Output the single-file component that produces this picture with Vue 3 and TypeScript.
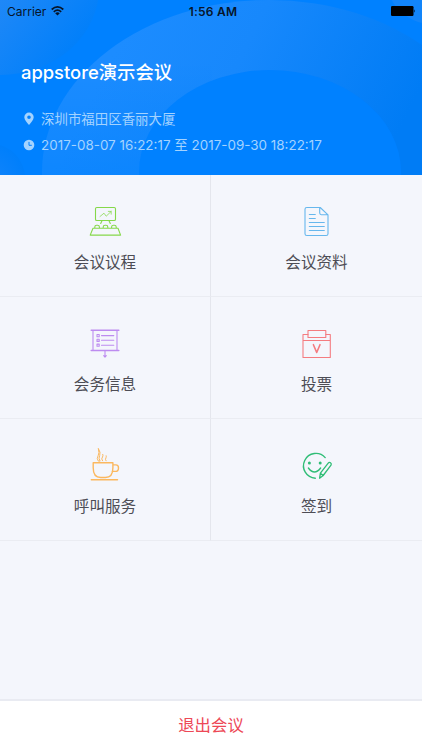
<script setup lang="ts">
interface MenuItem {
  icon: string
  label: string
}

const items: MenuItem[] = [
  { icon: 'agenda', label: '会议议程' },
  { icon: 'document', label: '会议资料' },
  { icon: 'info', label: '会务信息' },
  { icon: 'vote', label: '投票' },
  { icon: 'service', label: '呼叫服务' },
  { icon: 'signin', label: '签到' },
]
</script>

<template>
  <div class="screen">
    <header class="hero">
      <svg class="backdrop" viewBox="0 0 422 175" aria-hidden="true">
        <defs>
          <linearGradient id="ring" gradientUnits="userSpaceOnUse" x1="130" y1="20" x2="390" y2="150">
            <stop offset="0" stop-color="#1c8cff" />
            <stop offset="0.4" stop-color="#1788fc" />
            <stop offset="1" stop-color="#007cf5" />
          </linearGradient>
          <linearGradient id="ringFade" x1="0" y1="0" x2="0" y2="1">
            <stop offset="0.35" stop-color="#0081ff" stop-opacity="0" />
            <stop offset="1" stop-color="#0081ff" stop-opacity="0.5" />
          </linearGradient>
          <linearGradient id="corner" gradientUnits="userSpaceOnUse" x1="0" y1="0" x2="70" y2="60">
            <stop offset="0" stop-color="#1f88f7" />
            <stop offset="1" stop-color="#007ffa" />
          </linearGradient>
          <radialGradient id="low">
            <stop offset="0" stop-color="#1184fb" />
            <stop offset="1" stop-color="#007ffb" />
          </radialGradient>
        </defs>
        <ellipse cx="0" cy="-12" rx="99" ry="87" fill="url(#corner)" />
        <circle cx="-9" cy="178" r="34" fill="url(#low)" />
        <ellipse cx="269" cy="172" rx="227" ry="172" fill="url(#ring)" />
        <rect x="42" y="0" width="170" height="175" fill="url(#ringFade)" />
        <ellipse cx="270" cy="172" rx="131" ry="102" fill="#0081ff" />
        <circle cx="432" cy="-22" r="46" fill="#1285fa" />
      </svg>
      <div class="status">
        <div class="carrier">
          <span>Carrier</span>
          <svg width="13" height="10" viewBox="0 0 13 10" fill="none" stroke="#06152a" stroke-width="1.7">
            <path d="M.7 3.5Q6.5-1.6 12.3 3.5M2.8 5.8Q6.5 2.5 10.2 5.8" />
            <path d="M4.2 7.2Q6.5 5.4 8.8 7.2L6.5 9.6Z" fill="#06152a" stroke="none" />
          </svg>
        </div>
        <strong>1:56 AM</strong>
        <div class="power">
          <svg width="25" height="10" viewBox="0 0 25 10">
            <rect width="22.5" height="10" rx="1.2" />
            <path d="M23.3 3.2q1.5 1.8 0 3.6z" />
          </svg>
        </div>
      </div>
      <h1>appstore演示会议</h1>
      <div class="meta">
        <svg width="12" height="14" viewBox="0 0 12 14" fill="currentColor">
          <path fill-rule="evenodd" d="M6 .5A4.7 4.7 0 0 0 1.3 5.2C1.3 8 4.2 10.8 6 13c1.8-2.2 4.7-5 4.7-7.8A4.7 4.7 0 0 0 6 .5M6 3.4a1.8 1.8 0 1 1 0 3.6 1.8 1.8 0 0 1 0-3.6" />
        </svg>
        <span class="place">深圳市福田区香丽大厦</span>
      </div>
      <div class="meta">
        <svg width="12" height="12" viewBox="0 0 12 12">
          <circle cx="6" cy="6" r="5.3" fill="currentColor" />
          <path d="M6 2.9v3.4h2.8" fill="none" stroke="#0081ff" />
        </svg>
        <span class="time">2017-08-07 16:22:17 至 2017-09-30 18:22:17</span>
      </div>
    </header>

    <main class="grid">
      <div v-for="item in items" :key="item.icon" class="cell">
        <svg class="icon" :class="item.icon" viewBox="0 0 34 34">
          <g v-if="item.icon === 'agenda'">
            <rect x="7.5" y="3.5" width="20" height="13" rx="1.3" />
            <path d="M14 16.7l-1.3 2.8M21 16.7l1.3 2.8" />
            <path d="M12 12.5l4-3.3 2.2 3 5-4.8M20.3 7.4h2.9v2.8" stroke-width=".75" />
            <path d="M5 24.2h25l2.6 6.9H2.2zM6.8 24v-1q0-1.8 1.8-1.8h1q1.8 0 1.8 1.8v1M15.2 24v-1q0-1.8 1.8-1.8h1q1.8 0 1.8 1.8v1M23.6 24v-1q0-1.8 1.8-1.8h1q1.8 0 1.8 1.8v1" />
          </g>
          <g v-else-if="item.icon === 'document'">
            <path d="M20.2 3.5H6.8Q5 3.5 5 5.3v24.4q0 1.8 1.8 1.8h19.4q1.8 0 1.8-1.8V10.8zM19.7 3.5v5.6q0 1.6 1.6 1.6H28" />
            <path d="M9.3 10.5h6M9.3 14.5h6M9.3 18.5h15M9.3 22.5h15M9.3 26.5h15" />
          </g>
          <g v-else-if="item.icon === 'info'">
            <path d="M3.2 4.3h27.6M3.2 24.5h27.6" stroke-width="1.5" />
            <path d="M5 4.5v20M29 4.5v20" />
            <path d="M17 24.7v6.2M15.7 29.7l1.3 1.5 1.3-1.5" />
            <path d="M9 8.5h2.2v2.2H9zM9 13.2h2.2v2.2H9zM9 18.1h2.2v2.2H9zM13.5 9.6h12.3M13.5 14.3h12.3M13.5 19.2h12.3" />
          </g>
          <g v-else-if="item.icon === 'vote'">
            <path d="M8 8.5H3v23h27.3v-23h-4.5M3 14.5h27.3" />
            <rect x="8" y="4.5" width="17.8" height="7" />
            <path d="M13.4 18.7l3.3 7.8 3.3-7.8" stroke-width="1.6" />
          </g>
          <g v-else-if="item.icon === 'service'">
            <path d="M5.2 14.7h19.7v5q0 9.8-7.5 9.8h-4.7q-7.5 0-7.5-9.8zM24.9 16.9h3q2.6 0 2.6 3 0 3.5-3.3 3.5h-3M3.3 31.8h26.2" stroke-width="1.4" />
            <path d="M10.1 12.8q-1.8-2.2 0-5 1.6-2.7.2-7.4 2.7 4.3 1.4 7-1.5 3 .2 5.4zM14.5 12.8q-1.7-2 0-3.8.8-1 .3-2.6M18 12.8q-1.2-1.5 0-3.1.5-.7.2-1.9" stroke-width="1" />
          </g>
          <g v-else>
            <path d="M25.2 9.6A12.4 12.4 0 1 0 15.3 30.2M8.4 20q6 8.1 12.2 0" stroke-width="1.4" />
            <circle cx="9.4" cy="14.9" r="1.5" class="eye" />
            <circle cx="20.2" cy="14.9" r="1.5" class="eye" />
            <path d="M19.6 30.2l.8-5L28.2 15.1q1-1.2 2.3-.3t.5 2.4L23.2 27.5zM20.4 25.2l2.8 2.3" stroke-width="1.3" />
          </g>
        </svg>
        <span>{{ item.label }}</span>
      </div>
    </main>

    <button class="leave" type="button">退出会议</button>
  </div>
</template>

<style>
body {
  margin: 0;
}
</style>

<style scoped>
.screen {
  width: 422px;
  height: 750px;
  display: flex;
  flex-direction: column;
  overflow: hidden;
  background: #f4f6fc;
  font-family: Inter, "Noto Sans CJK SC", sans-serif;
}

.hero {
  position: relative;
  isolation: isolate;
  height: 175px;
  flex: none;
  background: #0081ff;
}

.backdrop {
  position: absolute;
  inset: 0;
  width: 422px;
  height: 175px;
  z-index: -1;
}

.status {
  height: 22px;
  display: grid;
  grid-template-columns: 1fr auto 1fr;
  align-items: center;
  padding: 0 6px 0 7px;
  color: #06152a;
  font-size: 12px;
}

.status strong {
  font-weight: 600;
  font-size: 12px;
  letter-spacing: 0.25px;
  padding-left: 3px;
}

.carrier {
  display: flex;
  align-items: center;
  gap: 5px;
}

.power {
  display: flex;
  justify-content: flex-end;
}

h1 {
  margin: 36px 0 19px 21px;
  height: 29px;
  color: #fff;
  font-size: 18.4px;
  line-height: 29px;
  font-weight: 500;
  letter-spacing: -0.02px;
  white-space: nowrap;
}

.meta {
  height: 26px;
  display: flex;
  align-items: center;
  gap: 6px;
  padding-left: 23px;
  color: #a4d3ff;
  line-height: 26px;
  white-space: nowrap;
}

.place,
.time {
  font-size: 13.45px;
}

.grid {
  display: grid;
  grid-template-columns: 211px 211px;
  grid-auto-rows: 122px;
  flex: 1;
  align-content: start;
}

.cell {
  box-sizing: border-box;
  padding-top: 29px;
  display: flex;
  flex-direction: column;
  align-items: center;
  border-bottom: 1px solid #eaecf2;
  color: #4d4d55;
  font-size: 15.6px;
  line-height: 24px;
}

.cell:nth-child(odd) {
  border-right: 1px solid #e4e6ed;
}

.icon {
  width: 34px;
  height: 34px;
  margin-bottom: 13px;
  overflow: visible;
  fill: none;
  stroke: currentColor;
  stroke-width: 1.1;
  stroke-linejoin: round;
  stroke-linecap: round;
}

.agenda {
  color: #85d84a;
}

.document {
  color: #66b7ed;
}

.info {
  color: #bd8cf0;
}

.vote {
  color: #f47c80;
}

.service {
  color: #fbb85f;
}

.signin {
  color: #2fbd76;
}

.eye {
  fill: currentColor;
  stroke: none;
}

.leave {
  box-sizing: border-box;
  height: 51px;
  flex: none;
  border: 0;
  border-top: 2px solid #e9ebf2;
  background: #fff;
  color: #ed4856;
  font-family: inherit;
  font-size: 16.4px;
  padding: 0 0 4px;
}
</style>
